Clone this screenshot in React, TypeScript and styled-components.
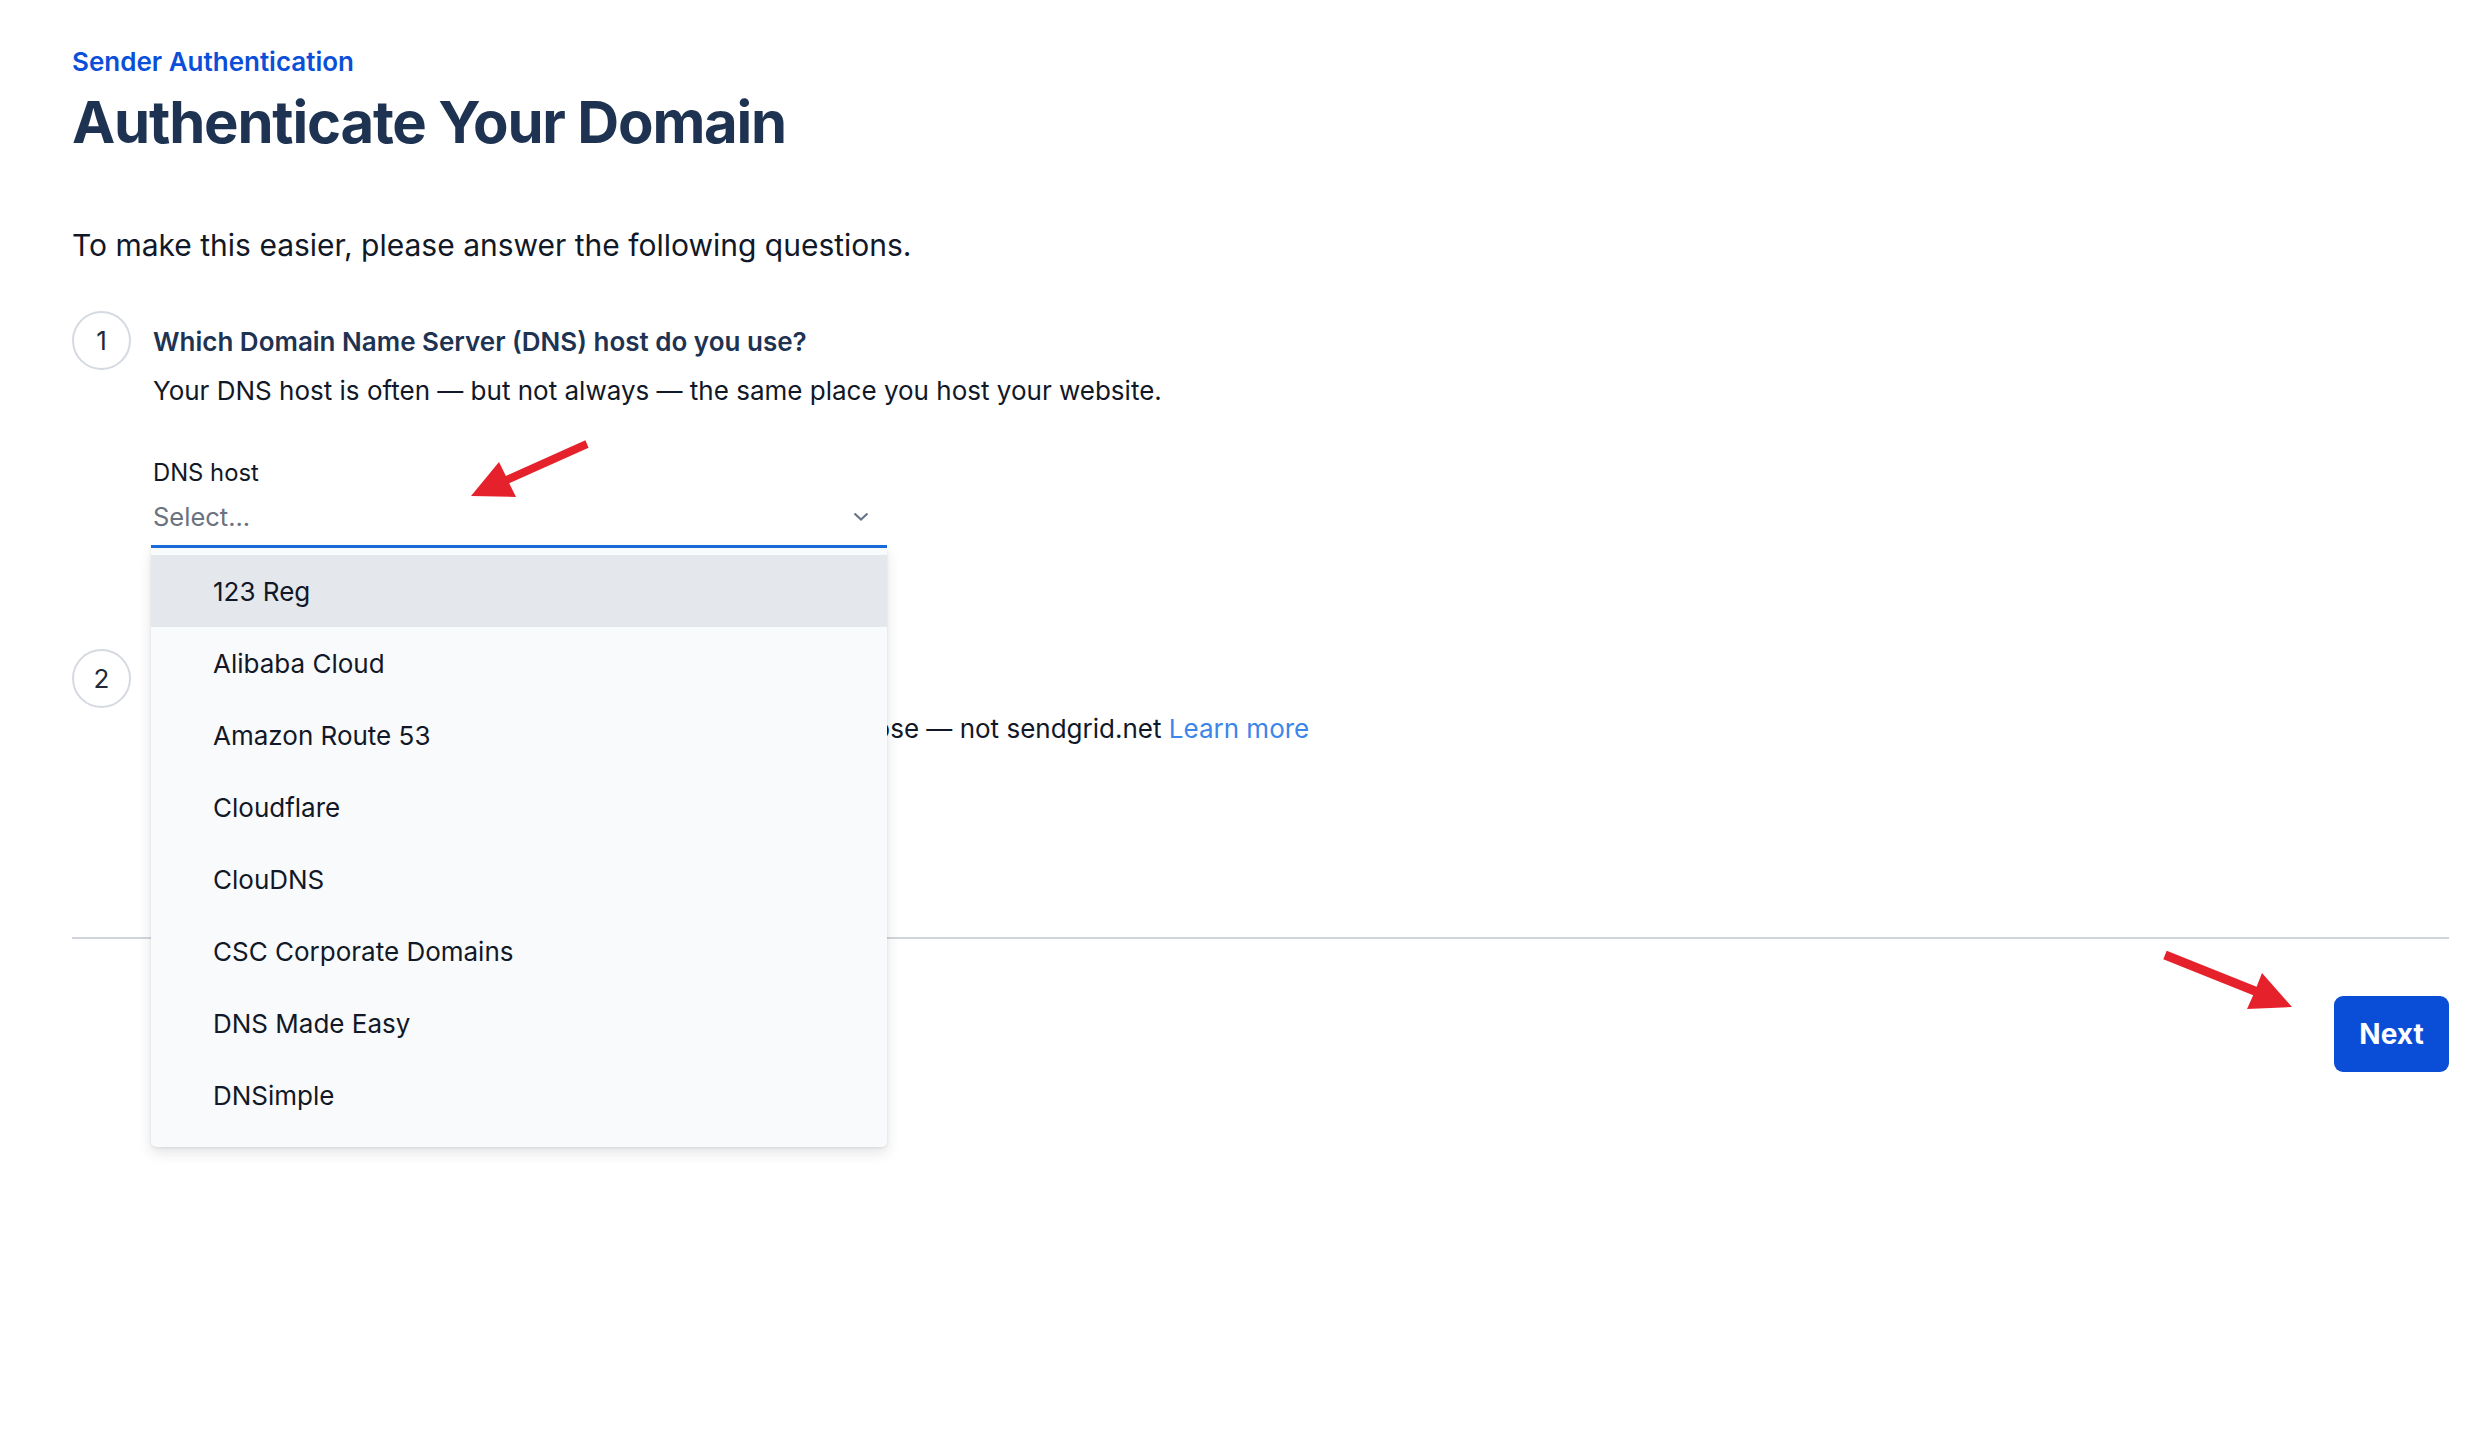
import React from "react";
import styled, { createGlobalStyle } from "styled-components";

const GlobalStyle = createGlobalStyle`
  html, body {
    margin: 0;
    padding: 0;
    background: #ffffff;
  }
  * {
    box-sizing: border-box;
  }
`;

const Page = styled.div`
  position: relative;
  min-height: 100vh;
  padding: 46px 21px 120px 72px;
  font-family: Inter, "Noto Sans", "Liberation Sans", sans-serif;
  color: #111827;
`;

const Eyebrow = styled.div`
  font-size: 26px;
  line-height: 32px;
  font-weight: 600;
  color: #0b4fd9;
`;

const Title = styled.h1`
  margin: 9px 0 0;
  font-size: 58px;
  line-height: 70px;
  font-weight: 700;
  letter-spacing: -1.2px;
  color: #1e3352;
`;

const Intro = styled.p`
  margin: 70px 0 0;
  font-size: 30px;
  line-height: 36px;
  color: #111827;
`;

const Step = styled.div<{ $gap: number }>`
  display: flex;
  align-items: flex-start;
  gap: 22px;
  margin-top: ${(p) => p.$gap}px;
`;

const StepNumber = styled.div`
  flex: none;
  width: 59px;
  height: 59px;
  border: 2px solid #d5d9e0;
  border-radius: 50%;
  display: flex;
  align-items: center;
  justify-content: center;
  font-size: 26px;
  color: #1f2937;
`;

const StepBody = styled.div`
  flex: 1;
  padding-top: 13px;
`;

const Question = styled.div`
  font-size: 26px;
  line-height: 36px;
  font-weight: 600;
  color: #1e3352;
`;

const Hint = styled.div`
  margin-top: 13px;
  font-size: 26px;
  line-height: 36px;
  color: #111827;
`;

const LearnMore = styled.a`
  color: #3b86e8;
  text-decoration: none;
`;

const Field = styled.div`
  margin-top: 49px;
  width: 736px;
  margin-left: -2px;
`;

const FieldLabel = styled.label`
  display: block;
  padding-left: 2px;
  font-size: 23.8px;
  line-height: 30px;
  color: #111827;
`;

const SelectWrap = styled.div`
  position: relative;
`;

const SelectControl = styled.div`
  height: 60px;
  display: flex;
  align-items: center;
  justify-content: space-between;
  padding: 0 18px 0 2px;
  border-bottom: 3px solid #1a6ddc;
`;

const Placeholder = styled.span`
  font-size: 25.5px;
  color: #6b7280;
`;

const Menu = styled.ul`
  position: absolute;
  top: 100%;
  left: 0;
  right: 0;
  margin: 0;
  padding: 7px 0 16px;
  list-style: none;
  background: #f9fafb;
  border-radius: 0 0 5px 5px;
  box-shadow: 0 6px 14px rgba(30, 41, 59, 0.12), 0 1px 3px rgba(30, 41, 59, 0.1);
  z-index: 2;
`;

const MenuItem = styled.li<{ $active?: boolean }>`
  height: 72px;
  display: flex;
  align-items: center;
  padding-left: 62px;
  font-size: 26px;
  color: #111827;
  background: ${(p) => (p.$active ? "#e4e7ec" : "transparent")};
`;

const Divider = styled.hr`
  margin: 190px 0 0;
  border: none;
  border-top: 2px solid #d1d5db;
`;

const Footer = styled.div`
  display: flex;
  justify-content: flex-end;
  margin-top: 57px;
`;

const NextButton = styled.button`
  width: 115px;
  height: 76px;
  border: none;
  border-radius: 9px;
  background: #0a4ed8;
  color: #ffffff;
  font-family: inherit;
  font-size: 28px;
  font-weight: 700;
  cursor: pointer;
`;

const Annotation = styled.svg<{ $left: number; $top: number }>`
  position: absolute;
  left: ${(p) => p.$left}px;
  top: ${(p) => p.$top}px;
  overflow: visible;
  z-index: 3;
`;

const hosts = [
  "123 Reg",
  "Alibaba Cloud",
  "Amazon Route 53",
  "Cloudflare",
  "ClouDNS",
  "CSC Corporate Domains",
  "DNS Made Easy",
  "DNSimple",
];

const Chevron = () => (
  <svg width="16" height="10" viewBox="0 0 16 10" fill="none">
    <path d="M1.5 1.5 L8 7.5 L14.5 1.5" stroke="#687488" strokeWidth="2.2" />
  </svg>
);

const App: React.FC = () => {
  return (
    <>
      <GlobalStyle />
      <Page>
        <Eyebrow>Sender Authentication</Eyebrow>
        <Title>Authenticate Your Domain</Title>
        <Intro>To make this easier, please answer the following questions.</Intro>

        <Step $gap={48}>
          <StepNumber>1</StepNumber>
          <StepBody>
            <Question>Which Domain Name Server (DNS) host do you use?</Question>
            <Hint>
              Your DNS host is often — but not always — the same place you host
              your website.
            </Hint>
            <Field>
              <FieldLabel>DNS host</FieldLabel>
              <SelectWrap>
                <SelectControl>
                  <Placeholder>Select...</Placeholder>
                  <Chevron />
                </SelectControl>
                <Menu>
                  {hosts.map((h, i) => (
                    <MenuItem key={h} $active={i === 0}>
                      {h}
                    </MenuItem>
                  ))}
                </Menu>
              </SelectWrap>
            </Field>
          </StepBody>
        </Step>

        <Step $gap={101}>
          <StepNumber>2</StepNumber>
          <StepBody>
            <Question>Would you also like to brand links?</Question>
            <Hint>
              Link branding lets links in your email use a domain you choose — not
              sendgrid.net <LearnMore href="#">Learn more</LearnMore>
            </Hint>
          </StepBody>
        </Step>

        <Divider />
        <Footer>
          <NextButton>Next</NextButton>
        </Footer>

        <Annotation $left={460} $top={430} width="140" height="80" viewBox="0 0 140 80">
          <polygon
            points="125.4,10.3 45.9,45.9 39,32 11,66 56,67 49.2,53.2 128.6,17.7"
            fill="#e5222b"
          />
        </Annotation>
        <Annotation $left={2150} $top={940} width="150" height="80" viewBox="0 0 150 80">
          <polygon
            points="16.7,10.8 106.6,46.8 112,33 142,67 97,69 103.2,55.2 13.3,19.2"
            fill="#e5222b"
          />
        </Annotation>
      </Page>
    </>
  );
};

export default App;
